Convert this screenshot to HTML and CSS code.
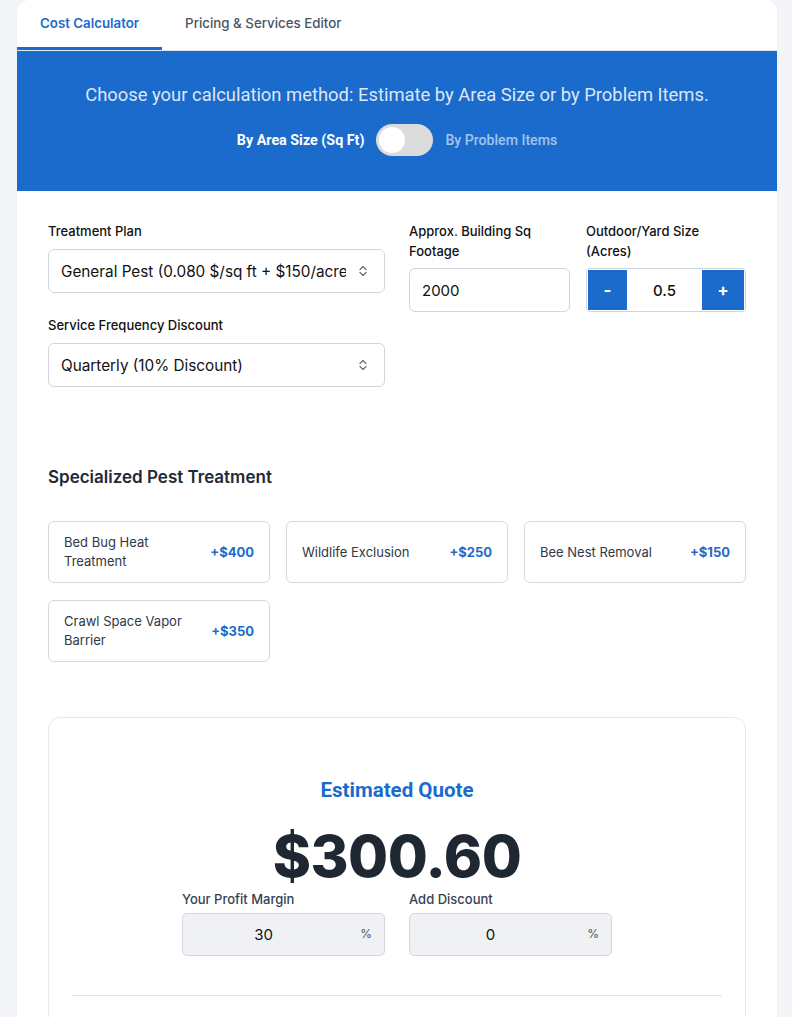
FILE: index.html
```html
<!DOCTYPE html>
<html>
<head>
<meta charset="utf-8">
<link rel="stylesheet" href="styles.css">
</head>
<body>
<div class="card">
  <div class="tabs">
    <div class="tab active">Cost Calculator</div>
    <div class="tab">Pricing &amp; Services Editor</div>
  </div>
  <div class="banner">
    <p class="banner-text">Choose your calculation method: Estimate by Area Size or by Problem Items.</p>
    <div class="toggle-row">
      <span class="toggle-label on">By Area Size (Sq Ft)</span>
      <span class="switch"><span class="knob"></span></span>
      <span class="toggle-label off">By Problem Items</span>
    </div>
  </div>
  <div class="content">
    <div class="form-grid">
      <div class="col">
        <div class="field">
          <div class="label">Treatment Plan</div>
          <div class="select">
            <span class="select-text">General Pest (0.080 $/sq ft + $150/acre)</span>
            <svg class="chev" width="10" height="14" viewBox="0 0 10 14"><path d="M2 5.5 L5 2.5 L8 5.5 M2 8.5 L5 11.5 L8 8.5" fill="none" stroke="#6b7280" stroke-width="1.3" stroke-linecap="round" stroke-linejoin="round"/></svg>
          </div>
        </div>
        <div class="field">
          <div class="label">Service Frequency Discount</div>
          <div class="select">
            <span class="select-text">Quarterly (10% Discount)</span>
            <svg class="chev" width="10" height="14" viewBox="0 0 10 14"><path d="M2 5.5 L5 2.5 L8 5.5 M2 8.5 L5 11.5 L8 8.5" fill="none" stroke="#6b7280" stroke-width="1.3" stroke-linecap="round" stroke-linejoin="round"/></svg>
          </div>
        </div>
      </div>
      <div class="sub-grid">
        <div class="field">
          <div class="label tight">Approx. Building Sq Footage</div>
          <div class="input">2000</div>
        </div>
        <div class="field">
          <div class="label tight">Outdoor/Yard Size (Acres)</div>
          <div class="stepper">
            <span class="step-btn minus">-</span>
            <span class="step-val">0.5</span>
            <span class="step-btn plus">+</span>
          </div>
        </div>
      </div>
    </div>

    <h2 class="section-title">Specialized Pest Treatment</h2>
    <div class="items">
      <div class="item"><span class="item-name">Bed Bug Heat Treatment</span><span class="item-price">+$400</span></div>
      <div class="item"><span class="item-name">Wildlife Exclusion</span><span class="item-price">+$250</span></div>
      <div class="item"><span class="item-name">Bee Nest Removal</span><span class="item-price">+$150</span></div>
      <div class="item"><span class="item-name">Crawl Space Vapor Barrier</span><span class="item-price">+$350</span></div>
    </div>

    <div class="quote">
      <div class="quote-title">Estimated Quote</div>
      <div class="quote-amount">$300.60</div>
      <div class="quote-fields">
        <div class="qfield">
          <div class="qlabel">Your Profit Margin</div>
          <div class="qinput"><span class="qval">30</span><span class="pct">%</span></div>
        </div>
        <div class="qfield">
          <div class="qlabel">Add Discount</div>
          <div class="qinput"><span class="qval">0</span><span class="pct">%</span></div>
        </div>
      </div>
      <div class="divider"></div>
    </div>
  </div>
</div>
</body>
</html>
```

FILE: styles.css
```css
* { box-sizing: border-box; }
html, body { margin: 0; padding: 0; }
body {
  background: #f4f5f9;
  font-family: Inter, "Liberation Sans", sans-serif;
  color: #111827;
  height: 1017px;
  overflow: hidden;
}
.card {
  margin-left: 17px;
  width: 760px;
  background: #fff;
  border-radius: 12px 12px 0 0;
  box-shadow: 0 0 3px rgba(0,0,0,0.04);
  min-height: 1100px;
}
.tabs {
  display: flex;
  height: 51px;
  border-bottom: 1px solid #e3e6ec;
}
.tab {
  padding: 0 23px;
  height: 50px;
  line-height: 47px;
  font-size: 13.3px;
  font-weight: 500;
  color: #4b5563;
}
.tab.active {
  color: #1a6bcc;
  font-weight: 600;
  border-bottom: 3px solid #1a6bcc;
}
.banner {
  background: #1a6bcc;
  height: 140px;
  padding-top: 32px;
  text-align: center;
  font-family: Roboto, "Liberation Sans", sans-serif;
}
.banner-text {
  margin: 0 0 17px;
  font-size: 18.4px;
  line-height: 24px;
  color: rgba(255,255,255,0.86);
}
.toggle-row {
  display: flex;
  justify-content: center;
  align-items: center;
  gap: 12px;
  height: 32px;
}
.toggle-label { font-size: 14.3px; font-weight: 700; }
.toggle-label.on { color: #fff; }
.toggle-label.off { color: rgba(255,255,255,0.62); font-weight: 500; font-size: 14.1px; }
.switch {
  width: 57px;
  height: 32px;
  border-radius: 16px;
  background: #dcdcdc;
  position: relative;
  display: block;
}
.knob {
  position: absolute;
  left: 3px;
  top: 3px;
  width: 26px;
  height: 26px;
  border-radius: 50%;
  background: #fff;
}
.content {
  padding: 30px 31px 0;
}
.form-grid {
  display: grid;
  grid-template-columns: 337px 337px;
  gap: 24px;
}
.sub-grid {
  display: grid;
  grid-template-columns: 161px 160px;
  column-gap: 16px;
  align-content: start;
}
.field { margin-bottom: 22px; }
.label {
  font-size: 13px;
  font-weight: 500;
  line-height: 20px;
  color: #111;
  margin-bottom: 8px;
}
.label.tight { margin-bottom: 7px; }
.select {
  height: 44px;
  border: 1px solid #d1d5db;
  border-radius: 6px;
  display: flex;
  align-items: center;
  padding: 0 16px 0 12px;
  gap: 12px;
}
.select-text {
  flex: 1;
  font-size: 15.3px;
  color: #111;
  white-space: nowrap;
  overflow: hidden;
}
.chev { flex: none; }
.input {
  height: 44px;
  border: 1px solid #d1d5db;
  border-radius: 6px;
  padding: 0 12px;
  display: flex;
  align-items: center;
  font-size: 15px;
  color: #111;
}
.stepper {
  height: 44px;
  border: 1px solid #d1d5db;
  border-radius: 4px;
  display: flex;
  align-items: stretch;
  padding: 1px;
}
.step-btn {
  width: 39px;
  background: #1a6bcc;
  color: #fff;
  font-size: 17px;
  font-weight: 700;
  display: flex;
  align-items: center;
  justify-content: center;
}
.step-btn.plus { width: 42px; }
.step-val {
  flex: 1;
  display: flex;
  align-items: center;
  justify-content: center;
  font-size: 15px;
  font-weight: 500;
  color: #111;
}
.section-title {
  margin: 56px 0 32px;
  font-size: 17px;
  line-height: 24px;
  font-weight: 600;
  color: #1f2937;
}
.items {
  display: grid;
  grid-template-columns: repeat(3, 1fr);
  column-gap: 16px;
  row-gap: 17px;
}
.item {
  height: 62px;
  border: 1px solid #d5d8df;
  border-radius: 6px;
  display: flex;
  align-items: center;
  justify-content: space-between;
  padding: 0 15px 0 15px;
  gap: 10px;
}
.item-name {
  font-size: 13px;
  line-height: 19px;
  color: #2f3846;
  max-width: 130px;
}
.item-price {
  font-size: 13px;
  font-weight: 700;
  color: #1a6bcc;
  white-space: nowrap;
}
.quote {
  margin-top: 55px;
  border: 1px solid #e5e7eb;
  border-radius: 12px;
  padding: 60px 23px 40px;
  text-align: center;
}
.quote-title {
  font-family: Roboto, "Liberation Sans", sans-serif;
  font-size: 20.5px;
  line-height: 24px;
  font-weight: 700;
  color: #1a6bcc;
}
.quote-amount {
  margin-top: 24px;
  font-size: 58px;
  line-height: 60px;
  font-weight: 800;
  color: #1f2733;
  letter-spacing: -0.5px;
}
.quote-fields {
  display: flex;
  justify-content: center;
  gap: 24px;
  margin-top: 3px;
}
.qfield { width: 203px; text-align: left; }
.qlabel {
  font-size: 13px;
  font-weight: 500;
  line-height: 20px;
  color: #374151;
  margin-bottom: 4px;
}
.qinput {
  height: 43px;
  background: #f0f1f5;
  border: 1px solid #d4d7de;
  border-radius: 5px;
  display: flex;
  align-items: center;
  position: relative;
  padding-right: 40px;
}
.qval {
  flex: 1;
  text-align: center;
  font-size: 15px;
  color: #111;
}
.pct {
  position: absolute;
  right: 12px;
  top: 12px;
  font-size: 12px;
  color: #4b5563;
}
.divider {
  margin-top: 39px;
  height: 1px;
  background: #e3e4e8;
}
```
